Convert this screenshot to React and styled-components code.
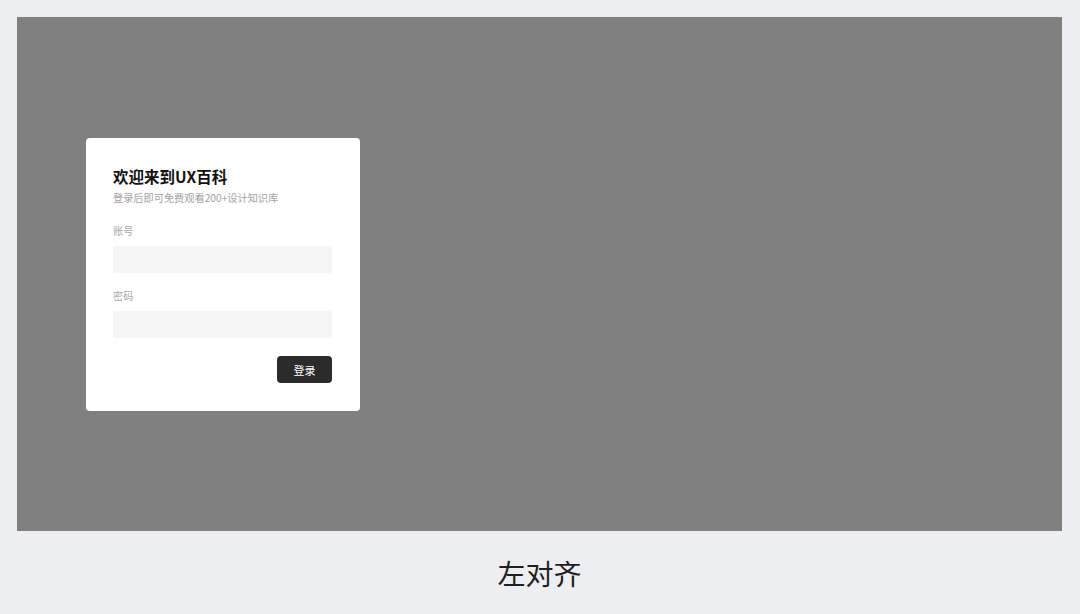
import React from 'react';
import styled, { createGlobalStyle } from 'styled-components';

const GlobalStyle = createGlobalStyle`
  html, body {
    margin: 0;
    padding: 0;
    background: #edeef2;
    font-family: "Noto Sans CJK SC", "Noto Sans", sans-serif;
  }
  * {
    box-sizing: border-box;
  }
`;

const Page = styled.div`
  width: 1080px;
  height: 614px;
  padding: 17px 18px 0 17px;
  display: flex;
  flex-direction: column;
  background: #edeef2;
`;

const Stage = styled.div`
  height: 514px;
  background: #808080;
  display: flex;
  align-items: center;
  padding-left: 69px;
  padding-top: 1px;
`;

const Card = styled.div`
  width: 274px;
  background: #ffffff;
  border-radius: 4px;
  padding: 28px 28px 28px 27px;
  display: flex;
  flex-direction: column;
`;

const Title = styled.h2`
  margin: 0;
  font-size: 15.5px;
  line-height: 20px;
  font-weight: 700;
  color: #111;
`;

const Subtitle = styled.p`
  margin: 5px 0 0;
  font-size: 10.2px;
  line-height: 14px;
  color: #a3a3a3;
`;

const Label = styled.label`
  margin-top: ${(p) => p.$gap}px;
  font-size: 10.2px;
  line-height: 14px;
  color: #a8a8a8;
`;

const Input = styled.input`
  margin-top: 8px;
  height: 27px;
  width: 100%;
  border: none;
  border-radius: 2px;
  background: #f5f5f5;
  outline: none;
  padding: 0 8px;
`;

const Actions = styled.div`
  margin-top: 18px;
  display: flex;
  justify-content: flex-end;
`;

const Button = styled.button`
  width: 55px;
  height: 27px;
  border: none;
  border-radius: 4px;
  background: #2b2b2b;
  color: #ffffff;
  font-family: inherit;
  font-size: 11px;
  cursor: pointer;
`;

const Caption = styled.div`
  height: 83px;
  display: flex;
  align-items: center;
  justify-content: center;
  font-size: 28px;
  color: #1f1f1f;
`;

export default function App() {
  return (
    <>
      <GlobalStyle />
      <Page>
        <Stage>
          <Card>
            <Title>欢迎来到UX百科</Title>
            <Subtitle>登录后即可免费观看200+设计知识库</Subtitle>
            <Label $gap={19}>账号</Label>
            <Input />
            <Label $gap={16}>密码</Label>
            <Input type="password" />
            <Actions>
              <Button>登录</Button>
            </Actions>
          </Card>
        </Stage>
        <Caption>左对齐</Caption>
      </Page>
    </>
  );
}
